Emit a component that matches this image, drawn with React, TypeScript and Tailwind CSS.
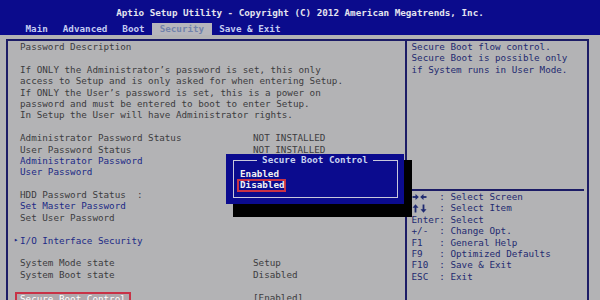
import React from "react";

const mono = { fontFamily: '"DejaVu Sans Mono", "Liberation Mono", monospace' };

type Row = { label?: string; value?: string; kind?: "gray" | "blue" | "sel" | "io" | "blank" };

const rows: Row[] = [
  { label: "Password Description" },
  { kind: "blank" },
  { label: "If ONLY the Administrator\u2019s password is set, this only" },
  { label: "access to Setup and is only asked for when entering Setup." },
  { label: "If ONLY the User\u2019s password is set, this is a power on" },
  { label: "password and must be entered to boot to enter Setup." },
  { label: "In Setup the User will have Administrator rights." },
  { kind: "blank" },
  { label: "Administrator Password Status", value: "NOT INSTALLED" },
  { label: "User Password Status", value: "NOT INSTALLED" },
  { label: "Administrator Password", kind: "blue" },
  { label: "User Password", kind: "blue" },
  { kind: "blank" },
  { label: "HDD Password Status  :" },
  { label: "Set Master Password", kind: "blue" },
  { label: "Set User Password" },
  { kind: "blank" },
  { label: "I/O Interface Security", kind: "io" },
  { kind: "blank" },
  { label: "System Mode state", value: "Setup" },
  { label: "System Boot state", value: "Disabled" },
  { kind: "blank" },
  { label: "Secure Boot Control", value: "[Enabled]", kind: "sel" },
];

function ArrowsLR() {
  return (
    <svg width="15" height="8" viewBox="0 0 15 8" className="block">
      <path d="M0.5 4H4.5" stroke="#1f2a70" strokeWidth="1.8" />
      <path d="M3.5 1L6.8 4L3.5 7Z" fill="#1f2a70" />
      <path d="M10.5 4H14.5" stroke="#1f2a70" strokeWidth="1.8" />
      <path d="M11.5 1L8.2 4L11.5 7Z" fill="#1f2a70" />
    </svg>
  );
}

function ArrowsUD() {
  return (
    <svg width="15" height="9" viewBox="0 0 15 9" className="block">
      <path d="M3.5 3V8.5" stroke="#1f2a70" strokeWidth="1.8" />
      <path d="M0.5 3.8L3.5 0.3L6.5 3.8Z" fill="#1f2a70" />
      <path d="M11.5 0.5V6" stroke="#1f2a70" strokeWidth="1.8" />
      <path d="M8.5 5.2L11.5 8.7L14.5 5.2Z" fill="#1f2a70" />
    </svg>
  );
}

const keys: [React.ReactNode, string][] = [
  [<ArrowsLR key="lr" />, "  : Select Screen"],
  [<ArrowsUD key="ud" />, "  : Select Item"],
  [null, "Enter: Select"],
  [null, "+/-  : Change Opt."],
  [null, "F1   : General Help"],
  [null, "F9   : Optimized Defaults"],
  [null, "F10  : Save & Exit"],
  [null, "ESC  : Exit"],
];

const tabs = ["Main", "Advanced", "Boot", "Security", "Save & Exit"];

export default function App() {
  return (
    <div
      className="relative w-[600px] h-[300px] overflow-hidden bg-[#b3b3b5] text-[9.25px] leading-[11.4px]"
      style={mono}
    >
      {/* header */}
      <div className="bg-[#0b0b8c]">
        <div className="h-[23px] pt-[3px] flex items-center justify-center font-bold text-[#e4e4ee] whitespace-pre">
          Aptio Setup Utility - Copyright (C) 2012 American Megatrends, Inc.
        </div>
        <div className="h-[12px] flex pl-[18px] font-bold">
          {tabs.map((t) => (
            <div
              key={t}
              className={
                "px-[7.5px] h-[12px] flex items-center whitespace-pre " +
                (t === "Security" ? "bg-[#b6b6bc] text-[#7282aa]" : "text-[#c4ccf2]")
              }
            >
              {t}
            </div>
          ))}
        </div>
      </div>

      {/* body */}
      <div className="flex pt-[4px]">
        <div className="ml-[6px] w-[399px] h-[280px] border-l-2 border-t-2 border-[#1c1c66] pl-[12px] text-[#3c3c40]">
          {rows.map((r, i) => {
            if (r.kind === "blank") return <div key={i} className="h-[11.4px]" />;
            return (
              <div key={i} className="grid grid-cols-[233px_1fr] h-[11.4px] whitespace-pre">
                <div className="flex items-center">
                  {r.kind === "io" && (
                    <span className="-ml-[6px] w-[6px] text-[7px] text-[#1c2a86]">▸</span>
                  )}
                  {r.kind === "sel" ? (
                    <span className="-ml-[5px] px-[3px] border-2 border-[#c83246] bg-[#b0a8ac] text-white leading-[9px] h-[14px]">
                      {r.label}
                    </span>
                  ) : (
                    <span className={r.kind === "blue" || r.kind === "io" ? "text-[#1c2a86]" : ""}>
                      {r.label}
                    </span>
                  )}
                </div>
                <div>{r.value ?? ""}</div>
              </div>
            );
          })}
        </div>
        <div className="w-[184px] h-[280px] border-2 border-[#1c1c66] pl-[4.5px] pr-[2px] text-[#1f2a70] flex flex-col">
          <div className="h-[148px] whitespace-pre">
            <div>Secure Boot flow control.</div>
            <div>Secure Boot is possible only</div>
            <div>if System runs in User Mode.</div>
          </div>
          <div className="h-[2px] bg-[#1c1c66] mr-[1px] -ml-[1px]" />
          <div className="whitespace-pre">
            {keys.map(([a, k]) => (
              <div key={k} className="h-[11.4px] flex items-center">
                {a && <span className="w-[16.7px] flex items-center">{a}</span>}
                <span>{k}</span>
              </div>
            ))}
          </div>
        </div>
      </div>

      {/* popup shadow */}
      <div className="absolute left-[233px] top-[160px] w-[179px] h-[57px] bg-black" />
      {/* popup */}
      <div className="absolute left-[226px] top-[154px] w-[178px] h-[50px] bg-[#0b0b8e]">
        <div className="absolute left-[7px] top-[6px] w-[165px] h-[38px] border border-[#c8c8dc]" />
        <div className="absolute left-0 right-0 top-[0px] flex justify-center">
          <span className="bg-[#0b0b8e] px-[5px] text-[#c8d2f0] font-bold leading-[11.4px]">
            Secure Boot Control
          </span>
        </div>
        <div className="absolute left-[14px] top-[13.5px] font-bold text-[#f2f2f2]">Enabled</div>
        <div className="absolute left-[11px] top-[24.5px] border-2 border-[#c83246] px-[1px] h-[13px] flex items-center font-bold text-[#f2f2f2] w-[49px]">
          Disabled
        </div>
      </div>
    </div>
  );
}
